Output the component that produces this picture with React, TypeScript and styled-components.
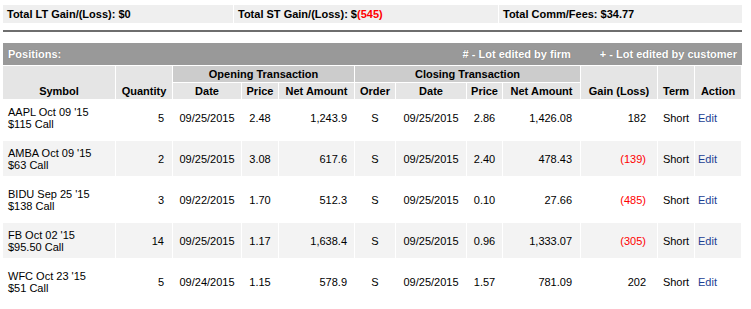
import React from "react";
import styled, { createGlobalStyle } from "styled-components";

const GlobalStyle = createGlobalStyle`
  html, body { margin: 0; padding: 0; background: #fff; }
  body {
    font-family: "Liberation Sans", Arial, Helvetica, sans-serif;
    font-size: 11px;
    color: #000;
  }
`;

const Page = styled.div`
  padding: 5px 0 0 3px;
  width: 739px;
`;

const SummaryBar = styled.div`
  display: flex;
  gap: 1px;
  height: 18px;
`;

const SummaryCell = styled.div<{ $w: number }>`
  width: ${(p) => p.$w}px;
  box-sizing: border-box;
  background: #efefef;
  font-weight: bold;
  padding-left: 4px;
  display: flex;
  align-items: center;
`;

const Red = styled.span`
  color: #ff0000;
`;

const Rule = styled.div`
  margin-top: 7px;
  height: 2px;
  background: #6e6e6e;
`;

const PositionsBar = styled.div`
  margin-top: 11px;
  height: 22px;
  background: #999999;
  color: #fff;
  font-weight: bold;
  display: flex;
  align-items: center;
  padding: 0 5px;
  text-shadow: 0 0 1px rgba(80, 80, 80, 0.6);
`;

const BarTitle = styled.span`
  flex: 1;
`;

const Legend = styled.span`
  margin-left: 29px;
`;

const Table = styled.table`
  margin-left: -1px;
  border-collapse: separate;
  border-spacing: 1px;
  table-layout: fixed;
  width: 740px;
`;

const HeadCell = styled.th<{ $dark?: boolean; $bottom?: boolean }>`
  height: 16px;
  padding: 0;
  background: ${(p) => (p.$dark ? "#cccccc" : "#e5e5e5")};
  font-weight: bold;
  text-align: center;
  vertical-align: ${(p) => (p.$bottom ? "bottom" : "middle")};
  white-space: nowrap;
  line-height: 16px;
`;

const Row = styled.tr<{ $shade: boolean }>`
  background: ${(p) => (p.$shade ? "#f3f3f3" : "#fff")};
`;

type Align = "left" | "center" | "right";

const Cell = styled.td<{ $align?: Align; $pl?: number; $pr?: number }>`
  height: 35px;
  padding: 0 ${(p) => p.$pr ?? 0}px 0 ${(p) => p.$pl ?? 0}px;
  border-bottom: 5px solid #fff;
  text-align: ${(p) => p.$align ?? "left"};
  vertical-align: middle;
  line-height: 12px;
  white-space: nowrap;
`;

const Loss = styled.span`
  color: #ff0000;
`;

const EditLink = styled.a`
  color: #1c3f94;
  text-decoration: none;
  cursor: pointer;
`;

const widths = [112, 56, 68, 36, 75, 40, 70, 35, 77, 76, 36, 46];

type Pos = {
  sym: string;
  desc: string;
  qty: string;
  oDate: string;
  oPrice: string;
  oNet: string;
  cDate: string;
  cPrice: string;
  cNet: string;
  gain: string;
  loss: boolean;
};

const rows: Pos[] = [
  { sym: "AAPL Oct 09 '15", desc: "$115 Call", qty: "5", oDate: "09/25/2015", oPrice: "2.48", oNet: "1,243.9", cDate: "09/25/2015", cPrice: "2.86", cNet: "1,426.08", gain: "182", loss: false },
  { sym: "AMBA Oct 09 '15", desc: "$63 Call", qty: "2", oDate: "09/25/2015", oPrice: "3.08", oNet: "617.6", cDate: "09/25/2015", cPrice: "2.40", cNet: "478.43", gain: "(139)", loss: true },
  { sym: "BIDU Sep 25 '15", desc: "$138 Call", qty: "3", oDate: "09/22/2015", oPrice: "1.70", oNet: "512.3", cDate: "09/25/2015", cPrice: "0.10", cNet: "27.66", gain: "(485)", loss: true },
  { sym: "FB Oct 02 '15", desc: "$95.50 Call", qty: "14", oDate: "09/25/2015", oPrice: "1.17", oNet: "1,638.4", cDate: "09/25/2015", cPrice: "0.96", cNet: "1,333.07", gain: "(305)", loss: true },
  { sym: "WFC Oct 23 '15", desc: "$51 Call", qty: "5", oDate: "09/24/2015", oPrice: "1.15", oNet: "578.9", cDate: "09/25/2015", cPrice: "1.57", cNet: "781.09", gain: "202", loss: false },
];

export default function App() {
  return (
    <>
      <GlobalStyle />
      <Page>
        <SummaryBar>
          <SummaryCell $w={230}>Total LT Gain/(Loss): $0</SummaryCell>
          <SummaryCell $w={264}>
            Total ST Gain/(Loss): $<Red>(545)</Red>
          </SummaryCell>
          <SummaryCell $w={243}>Total Comm/Fees: $34.77</SummaryCell>
        </SummaryBar>
        <Rule />
        <PositionsBar>
          <BarTitle>Positions:</BarTitle>
          <Legend># - Lot edited by firm</Legend>
          <Legend>+ - Lot edited by customer</Legend>
        </PositionsBar>
        <Table>
          <colgroup>
            {widths.map((w, i) => (
              <col key={i} style={{ width: w }} />
            ))}
          </colgroup>
          <thead>
            <tr>
              <HeadCell rowSpan={2} $bottom>Symbol</HeadCell>
              <HeadCell rowSpan={2} $bottom>Quantity</HeadCell>
              <HeadCell colSpan={3} $dark>Opening Transaction</HeadCell>
              <HeadCell colSpan={4} $dark>Closing Transaction</HeadCell>
              <HeadCell rowSpan={2} $bottom>Gain (Loss)</HeadCell>
              <HeadCell rowSpan={2} $bottom>Term</HeadCell>
              <HeadCell rowSpan={2} $bottom>Action</HeadCell>
            </tr>
            <tr>
              <HeadCell>Date</HeadCell>
              <HeadCell>Price</HeadCell>
              <HeadCell>Net Amount</HeadCell>
              <HeadCell>Order</HeadCell>
              <HeadCell>Date</HeadCell>
              <HeadCell>Price</HeadCell>
              <HeadCell>Net Amount</HeadCell>
            </tr>
          </thead>
          <tbody>
            {rows.map((r, i) => (
              <Row key={r.sym} $shade={i % 2 === 1}>
                <Cell $pl={5}>
                  {r.sym}
                  <br />
                  {r.desc}
                </Cell>
                <Cell $align="right" $pr={8}>{r.qty}</Cell>
                <Cell $align="center">{r.oDate}</Cell>
                <Cell $align="center">{r.oPrice}</Cell>
                <Cell $align="right" $pr={7}>{r.oNet}</Cell>
                <Cell $align="center">S</Cell>
                <Cell $align="center">{r.cDate}</Cell>
                <Cell $align="center">{r.cPrice}</Cell>
                <Cell $align="right" $pr={8}>{r.cNet}</Cell>
                <Cell $align="right" $pr={11}>
                  {r.loss ? <Loss>{r.gain}</Loss> : r.gain}
                </Cell>
                <Cell $align="center">Short</Cell>
                <Cell $pl={3}>
                  <EditLink>Edit</EditLink>
                </Cell>
              </Row>
            ))}
          </tbody>
        </Table>
      </Page>
    </>
  );
}
